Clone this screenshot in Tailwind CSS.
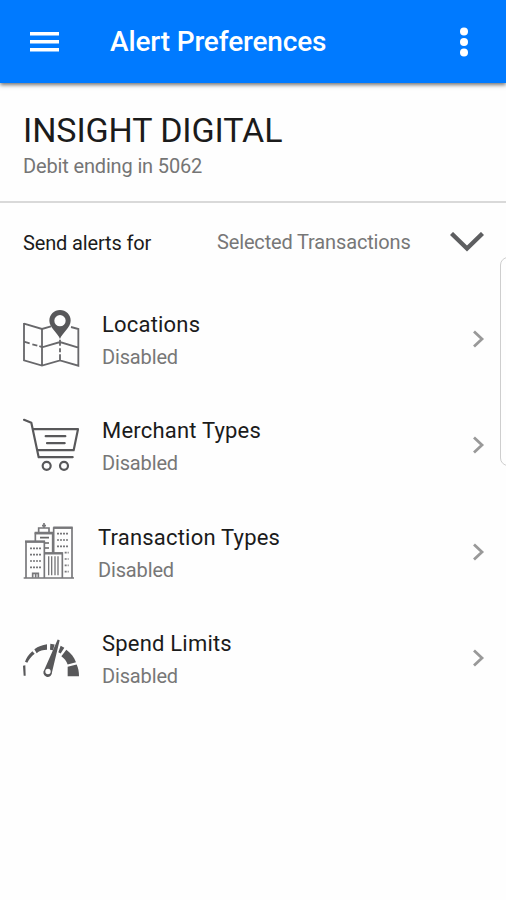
<!DOCTYPE html>
<html lang="en">
<head>
<meta charset="utf-8">
<title>Alert Preferences</title>
<script src="https://cdn.jsdelivr.net/npm/@tailwindcss/browser@4"></script>
</head>
<body class="relative h-[900px] w-[506px] overflow-hidden bg-[#fefefe] font-[Roboto,sans-serif] text-[#1b1b1b] whitespace-nowrap">
<header class="relative flex h-[83px] items-center bg-[#007aff] pl-[30px] text-white shadow-[0_2px_4px_rgba(0,0,0,0.55)]">
  <svg class="mt-px h-5 w-[29px]" viewBox="0 0 29 20" fill="#fff"><path d="M0 0h29v3.4H0zM0 8h29v3.4H0zM0 16h29v3.4H0z"/></svg>
  <h1 class="ml-[51px] w-[216px] text-[28px] leading-8 font-medium tracking-[-0.15px]">Alert Preferences</h1>
  <svg class="ml-[133px] h-[30px] w-[10px]" viewBox="0 0 10 30" fill="#fff"><circle cx="5" cy="4.4" r="4"/><circle cx="5" cy="15" r="4"/><circle cx="5" cy="25.6" r="4"/></svg>
</header>
<section class="h-[120px] border-b-2 border-[#d9d9d9] pt-[28px] pl-[23px]">
  <h2 class="text-[34px] leading-[39px] tracking-[-0.1px]">INSIGHT DIGITAL</h2>
  <p class="mt-[4px] text-[20px] leading-6 tracking-[-0.15px] text-[#757575]">Debit ending in 5062</p>
</section>
<section class="flex h-[82.75px] items-center pl-[23px]">
  <span class="mt-[-3px] w-[194px] text-[20px] leading-6 tracking-[-0.15px]">Send alerts for</span>
  <span class="mt-[-4px] w-[233px] text-[20px] leading-6 tracking-[-0.15px] text-[#777]">Selected Transactions</span>
  <svg class="mt-[-4px] h-[20px] w-[34px]" viewBox="0 0 34 20" fill="none" stroke="#5d5e60" stroke-width="4.4"><path d="M1.5 1.5 17 16.5 32.5 1.5"/></svg>
</section>
<main>
  <div class="flex h-[106.5px] items-center pl-[22px]">
    <svg class="h-[62px] w-[60px]" viewBox="36 24 180 186" fill="none" stroke="#68686b" stroke-width="5.5">
      <path d="M42 69v112l54 16 54-16 55 16V87l-22-6M42 71l54 16 27-8M96 87v110M42 125l17 5M67 133l15 4M88 138l8 4 54-16 55 17M150 119v18M150 145v12M150 163v18"/>
      <path d="M150 117c-6-18-32-34-32-55a32 32 0 0 1 64 0c0 21-26 37-32 55zM150 45a17 17 0 1 0 0 34 17 17 0 0 0 0-34z" fill="#58585a" fill-rule="evenodd" stroke="none"/>
    </svg>
    <div class="mt-[3px] ml-5 w-[370px]"><h3 class="text-[22px] leading-8 tracking-[0.2px]">Locations</h3><p class="text-[20px] leading-8 tracking-[-0.15px] text-[#777]">Disabled</p></div>
    <svg class="h-[18px] w-[13px]" viewBox="0 0 13 18" fill="none" stroke="#999" stroke-width="2.8"><path d="M2 1.5 10 9 2 16.5"/></svg>
  </div>
  <div class="flex h-[106.5px] items-center pl-[22px]">
    <svg class="h-[62px] w-[60px]" viewBox="36 28.5 180 186" fill="none" stroke="#58585a" stroke-width="6.5" stroke-linecap="round" stroke-linejoin="round">
      <path d="m42 43 22 9 22 103h102M70 71h134l-13 63H82M107 92h59M111 113h53"/><circle cx="110" cy="181" r="12"/><circle cx="162" cy="181" r="12"/>
    </svg>
    <div class="mt-[3px] ml-5 w-[370px]"><h3 class="text-[22px] leading-8 tracking-[0.2px]">Merchant Types</h3><p class="text-[20px] leading-8 tracking-[-0.15px] text-[#777]">Disabled</p></div>
    <svg class="mt-[-1px] h-[18px] w-[13px]" viewBox="0 0 13 18" fill="none" stroke="#999" stroke-width="2.8"><path d="M2 1.5 10 9 2 16.5"/></svg>
  </div>
  <div class="flex h-[106.5px] items-center pl-[22px]">
    <svg class="h-[62px] w-[60px]" viewBox="36 27 180 186" fill="none" stroke="#77777a" stroke-width="5">
      <path d="M41 198h151M48 198V89h55v109M76 88V64h52v58M86 62V48h31v14M102 47V33M96 41h12M131 122V48h55v150M103 198v-75h54v75" />
      <path d="M45 89h60M74 63h55M130 47h58M102 124h56" stroke-width="7"/>
      <path d="M90 77h27M105 93h12M105 108h12" stroke-width="5" stroke="#666"/>
      <path d="M116 133v57M125 133v57M135 133v57M144 133v57" stroke-width="4"/>
      <path d="M60 109h34M60 128h34M60 147h34M60 166h34M141 65h34M141 84h34M141 103h34M164 122h12M164 141h12M164 160h12M164 179h12" stroke-width="5" stroke-dasharray="6 3"/>
      <path d="M68 197v-13h17v13M77 184v13"/>
    </svg>
    <div class="mt-[3px] ml-4 w-[374px]"><h3 class="text-[22px] leading-8 tracking-[0.2px]">Transaction Types</h3><p class="text-[20px] leading-8 tracking-[-0.15px] text-[#777]">Disabled</p></div>
    <svg class="h-[18px] w-[13px]" viewBox="0 0 13 18" fill="none" stroke="#999" stroke-width="2.8"><path d="M2 1.5 10 9 2 16.5"/></svg>
  </div>
  <div class="flex h-[106.5px] items-center pl-[22px]">
    <svg class="h-[62px] w-[60px]" viewBox="36 22.5 180 186" fill="#58585a">
      <path d="m39 136 7-2 1 32h-6zM45 124c4-13 11-22 22-32l7 8c-10 8-17 17-22 27zM73 86c12-9 24-13 38-15v17c-12 0-22 3-31 10zM121 70l13 2-5 17-9-1zM152 76l11 6-11 17-7-4zM169 88c14 10 23 22 29 37l-25 7c-4-11-10-19-19-25zM173 139l27-7c5 11 7 22 7 35h-34z"/>
      <path fill-rule="evenodd" d="m143 57 6 2-23 96a13 13 0 1 1-23-7zM114 145a8 8 0 1 0 0 16 8 8 0 0 0 0-16z"/>
    </svg>
    <div class="mt-[3px] ml-5 w-[370px]"><h3 class="text-[22px] leading-8 tracking-[0.2px]">Spend Limits</h3><p class="text-[20px] leading-8 tracking-[-0.15px] text-[#777]">Disabled</p></div>
    <svg class="mt-[-1px] h-[18px] w-[13px]" viewBox="0 0 13 18" fill="none" stroke="#999" stroke-width="2.8"><path d="M2 1.5 10 9 2 16.5"/></svg>
  </div>
</main>
<div class="absolute top-[257px] left-[500px] h-[209px] w-4 rounded-l-[8px] border border-[#cecece]"></div>
</body>
</html>
